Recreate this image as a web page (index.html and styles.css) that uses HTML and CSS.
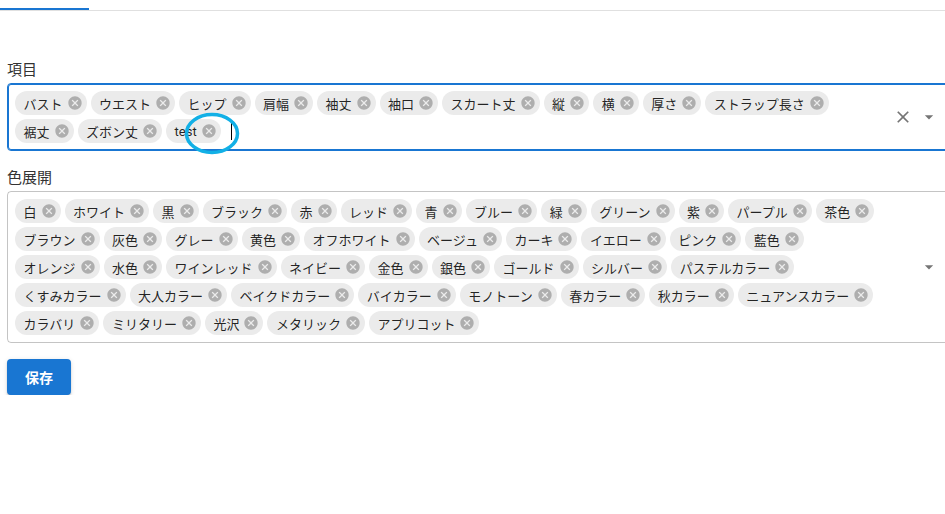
FILE: index.html
```html
<!DOCTYPE html>
<html lang="ja">
<head>
    <meta charset="UTF-8">
    <title>項目設定</title>
    <link rel="stylesheet" href="styles.css">
</head>
<body>
    <svg class="defs" aria-hidden="true">
        <symbol id="cancel" viewBox="0 0 24 24">
            <path d="M12 2C6.47 2 2 6.47 2 12s4.47 10 10 10 10-4.47 10-10S17.53 2 12 2zm5 13.59L15.59 17 12 13.41 8.41 17 7 15.59 10.59 12 7 8.41 8.41 7 12 10.59 15.59 7 17 8.41 13.41 12 17 15.59z"/>
        </symbol>
        <symbol id="close" viewBox="0 0 24 24">
            <path d="M19 6.41L17.59 5 12 10.59 6.41 5 5 6.41 10.59 12 5 17.59 6.41 19 12 13.41 17.59 19 19 17.59 13.41 12z"/>
        </symbol>
        <symbol id="arrow" viewBox="0 0 24 24">
            <path d="M7 10l5 5 5-5z"/>
        </symbol>
    </svg>

    <div class="tabs"><div class="indicator"></div></div>

    <form class="form">
        <div class="field">
            <label>項目</label>
            <div class="box focused">
                <div class="chip"><span>バスト</span><svg><use href="#cancel"/></svg></div>
                <div class="chip"><span>ウエスト</span><svg><use href="#cancel"/></svg></div>
                <div class="chip"><span>ヒップ</span><svg><use href="#cancel"/></svg></div>
                <div class="chip"><span>肩幅</span><svg><use href="#cancel"/></svg></div>
                <div class="chip"><span>袖丈</span><svg><use href="#cancel"/></svg></div>
                <div class="chip"><span>袖口</span><svg><use href="#cancel"/></svg></div>
                <div class="chip"><span>スカート丈</span><svg><use href="#cancel"/></svg></div>
                <div class="chip"><span>縦</span><svg><use href="#cancel"/></svg></div>
                <div class="chip"><span>横</span><svg><use href="#cancel"/></svg></div>
                <div class="chip"><span>厚さ</span><svg><use href="#cancel"/></svg></div>
                <div class="chip"><span>ストラップ長さ</span><svg><use href="#cancel"/></svg></div>
                <div class="chip"><span>裾丈</span><svg><use href="#cancel"/></svg></div>
                <div class="chip"><span>ズボン丈</span><svg><use href="#cancel"/></svg></div>
                <div class="chip"><span>test</span><svg><use href="#cancel"/></svg></div>
                <div class="input"><span class="caret"></span></div>
                <div class="adornment">
                    <button type="button" class="icon-btn"><svg class="clear"><use href="#close"/></svg></button>
                    <button type="button" class="icon-btn"><svg><use href="#arrow"/></svg></button>
                </div>
                <svg class="mark" width="56" height="43" viewBox="0 0 56 43"><ellipse cx="28" cy="21.5" rx="25.5" ry="19"/></svg>
            </div>
        </div>

        <div class="field">
            <label>色展開</label>
            <div class="box">
                <div class="chip"><span>白</span><svg><use href="#cancel"/></svg></div>
                <div class="chip"><span>ホワイト</span><svg><use href="#cancel"/></svg></div>
                <div class="chip"><span>黒</span><svg><use href="#cancel"/></svg></div>
                <div class="chip"><span>ブラック</span><svg><use href="#cancel"/></svg></div>
                <div class="chip"><span>赤</span><svg><use href="#cancel"/></svg></div>
                <div class="chip"><span>レッド</span><svg><use href="#cancel"/></svg></div>
                <div class="chip"><span>青</span><svg><use href="#cancel"/></svg></div>
                <div class="chip"><span>ブルー</span><svg><use href="#cancel"/></svg></div>
                <div class="chip"><span>緑</span><svg><use href="#cancel"/></svg></div>
                <div class="chip"><span>グリーン</span><svg><use href="#cancel"/></svg></div>
                <div class="chip"><span>紫</span><svg><use href="#cancel"/></svg></div>
                <div class="chip"><span>パープル</span><svg><use href="#cancel"/></svg></div>
                <div class="chip"><span>茶色</span><svg><use href="#cancel"/></svg></div>
                <div class="chip"><span>ブラウン</span><svg><use href="#cancel"/></svg></div>
                <div class="chip"><span>灰色</span><svg><use href="#cancel"/></svg></div>
                <div class="chip"><span>グレー</span><svg><use href="#cancel"/></svg></div>
                <div class="chip"><span>黄色</span><svg><use href="#cancel"/></svg></div>
                <div class="chip"><span>オフホワイト</span><svg><use href="#cancel"/></svg></div>
                <div class="chip"><span>ベージュ</span><svg><use href="#cancel"/></svg></div>
                <div class="chip"><span>カーキ</span><svg><use href="#cancel"/></svg></div>
                <div class="chip"><span>イエロー</span><svg><use href="#cancel"/></svg></div>
                <div class="chip"><span>ピンク</span><svg><use href="#cancel"/></svg></div>
                <div class="chip"><span>藍色</span><svg><use href="#cancel"/></svg></div>
                <div class="chip"><span>オレンジ</span><svg><use href="#cancel"/></svg></div>
                <div class="chip"><span>水色</span><svg><use href="#cancel"/></svg></div>
                <div class="chip"><span>ワインレッド</span><svg><use href="#cancel"/></svg></div>
                <div class="chip"><span>ネイビー</span><svg><use href="#cancel"/></svg></div>
                <div class="chip"><span>金色</span><svg><use href="#cancel"/></svg></div>
                <div class="chip"><span>銀色</span><svg><use href="#cancel"/></svg></div>
                <div class="chip"><span>ゴールド</span><svg><use href="#cancel"/></svg></div>
                <div class="chip"><span>シルバー</span><svg><use href="#cancel"/></svg></div>
                <div class="chip"><span>パステルカラー</span><svg><use href="#cancel"/></svg></div>
                <div class="chip"><span>くすみカラー</span><svg><use href="#cancel"/></svg></div>
                <div class="chip"><span>大人カラー</span><svg><use href="#cancel"/></svg></div>
                <div class="chip"><span>ベイクドカラー</span><svg><use href="#cancel"/></svg></div>
                <div class="chip"><span>バイカラー</span><svg><use href="#cancel"/></svg></div>
                <div class="chip"><span>モノトーン</span><svg><use href="#cancel"/></svg></div>
                <div class="chip"><span>春カラー</span><svg><use href="#cancel"/></svg></div>
                <div class="chip"><span>秋カラー</span><svg><use href="#cancel"/></svg></div>
                <div class="chip"><span>ニュアンスカラー</span><svg><use href="#cancel"/></svg></div>
                <div class="chip"><span>カラバリ</span><svg><use href="#cancel"/></svg></div>
                <div class="chip"><span>ミリタリー</span><svg><use href="#cancel"/></svg></div>
                <div class="chip"><span>光沢</span><svg><use href="#cancel"/></svg></div>
                <div class="chip"><span>メタリック</span><svg><use href="#cancel"/></svg></div>
                <div class="chip"><span>アプリコット</span><svg><use href="#cancel"/></svg></div>
                <div class="input"></div>
                <div class="adornment">
                    <button type="button" class="icon-btn"><svg><use href="#arrow"/></svg></button>
                </div>
            </div>
        </div>

        <button type="submit" class="save">保存</button>
    </form>
</body>
</html>
```

FILE: styles.css
```css
html {
    overflow: hidden;
}
body {
    margin: 0;
    font-family: Roboto, "Noto Sans CJK JP", sans-serif;
    color: rgba(0,0,0,0.87);
    background-color: #fff;
}
.defs {
    display: none;
}
.tabs {
    display: flex;
    align-items: flex-end;
    height: 10px;
    border-bottom: 1px solid #e0e0e0;
}
.indicator {
    width: 89px;
    height: 2px;
    background-color: #1976d2;
}
.form {
    padding: 47px 0 0 7px;
}
.field + .field {
    margin-top: 15px;
}
label {
    display: block;
    margin-bottom: 1px;
    font-size: 15px;
    line-height: 24px;
    color: #333;
}
.box {
    position: relative;
    display: flex;
    flex-wrap: wrap;
    align-items: center;
    width: 944px;
    box-sizing: border-box;
    padding: 5px 69px 5px 5px;
    border: 1px solid rgba(0,0,0,0.23);
    border-radius: 4px;
}
.box.focused {
    border-color: #1976d2;
    box-shadow: inset 0 0 0 1px #1976d2;
}
.chip {
    display: inline-flex;
    align-items: center;
    height: 24px;
    margin: 2px;
    border-radius: 12px;
    background-color: #ebebeb;
    font-size: 13px;
    white-space: nowrap;
}
.chip span {
    padding: 1px 8px 0 8.5px;
}
.chip svg {
    width: 16px;
    height: 16px;
    margin: 0 4px 0 -4px;
    fill: rgba(0,0,0,0.26);
}
.input {
    flex-grow: 1;
    min-width: 30px;
    height: 28px;
    display: flex;
    align-items: center;
    padding-left: 8px;
}
.caret {
    width: 1px;
    height: 18px;
    background-color: #000;
}
.adornment {
    position: absolute;
    right: 9px;
    top: calc(50% - 14px);
    display: flex;
}
.icon-btn {
    width: 28px;
    height: 28px;
    margin-right: -2px;
    padding: 4px;
    border: none;
    background: none;
    display: flex;
    align-items: center;
    justify-content: center;
}
.icon-btn svg {
    width: 20px;
    height: 20px;
    fill: rgba(0,0,0,0.54);
}
.mark {
    position: absolute;
    left: 176px;
    top: 28px;
    fill: none;
    stroke: #12b0e6;
    stroke-width: 3.5;
}
.save {
    margin-top: 16px;
    min-width: 64px;
    height: 36px;
    padding: 6px 16px;
    border: none;
    border-radius: 4px;
    background-color: #1976d2;
    color: #fff;
    font-family: Roboto, "Noto Sans CJK JP", sans-serif;
    font-size: 14px;
    font-weight: 700;
    box-shadow: 0 3px 1px -2px rgba(0,0,0,0.2), 0 2px 2px 0 rgba(0,0,0,0.14), 0 1px 5px 0 rgba(0,0,0,0.12);
}
```
